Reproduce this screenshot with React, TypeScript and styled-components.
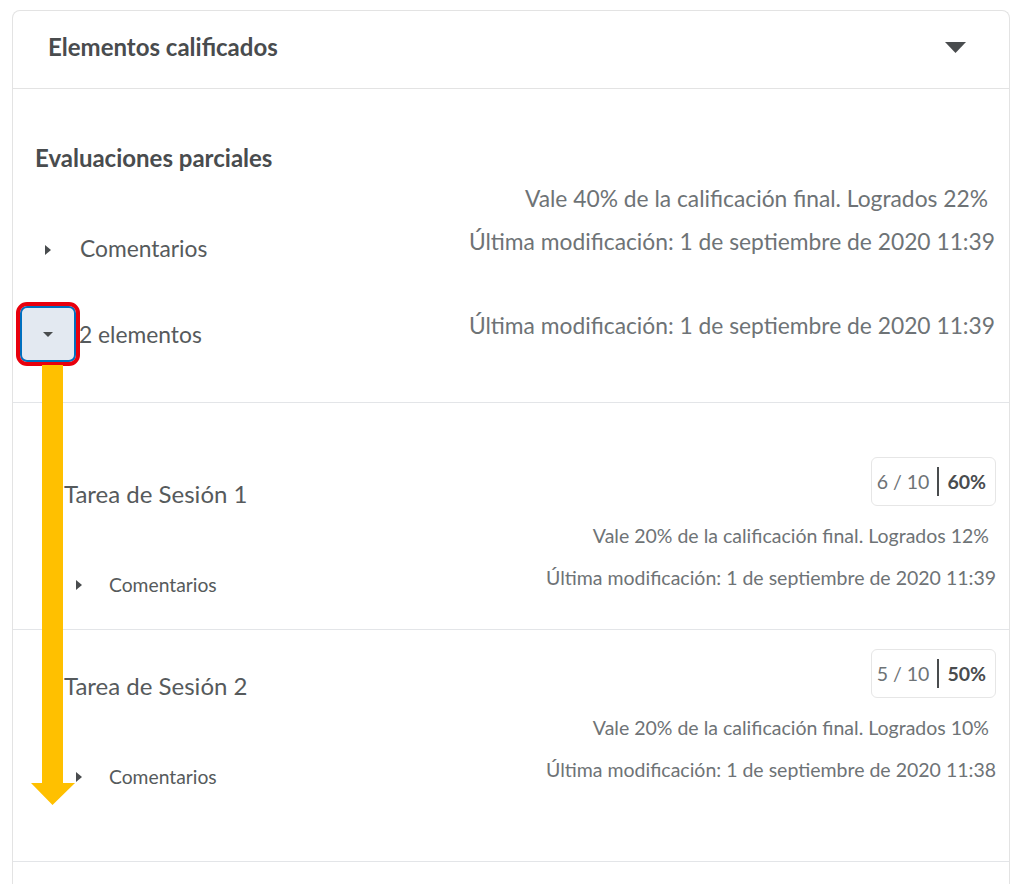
import React from "react";
import styled, { createGlobalStyle } from "styled-components";

const GlobalStyle = createGlobalStyle`
  body {
    margin: 0;
    background: #ffffff;
    font-family: Lato, "Noto Sans", sans-serif;
  }
`;

const items = [
  {
    title: "Tarea de Sesión 1",
    score: "6 / 10",
    percent: "60%",
    weight: "Vale 20% de la calificación final. Logrados 12%",
    modified: "Última modificación: 1 de septiembre de 2020 11:39",
    top: 54,
    bottom: 32,
  },
  {
    title: "Tarea de Sesión 2",
    score: "5 / 10",
    percent: "50%",
    weight: "Vale 20% de la calificación final. Logrados 10%",
    modified: "Última modificación: 1 de septiembre de 2020 11:38",
    top: 19,
    bottom: 72,
  },
];

const CaretDown = ({ w, h }: { w: number; h: number }) => (
  <svg width={w} height={h} viewBox={`0 0 ${w} ${h}`}>
    <polygon points={`0,0 ${w},0 ${w / 2},${h}`} fill="#494c4e" />
  </svg>
);

const CaretRight = () => (
  <svg width="6" height="10" viewBox="0 0 6 10">
    <polygon points="0,0 6,5 0,10" fill="#494c4e" />
  </svg>
);

const DownArrow = () => (
  <ArrowSvg width="44" height="440" viewBox="0 0 44 440">
    <polygon
      points="11,0 32,0 32,418 44,418 21.5,440 0,418 11,418"
      fill="#ffc000"
    />
  </ArrowSvg>
);

const App = () => {
  return (
    <>
      <GlobalStyle />
      <Card>
        <Header>
          <HeaderTitle>Elementos calificados</HeaderTitle>
          <HeaderCaret>
            <CaretDown w={21} h={11} />
          </HeaderCaret>
        </Header>

        <Category>
          <CategoryTitle>Evaluaciones parciales</CategoryTitle>
          <Meta inset={7} gap={12}>
            Vale 40% de la calificación final. Logrados 22%
          </Meta>
          <Row gap={15}>
            <Left>
              <Slot>
                <CaretRight />
              </Slot>
              <Label>Comentarios</Label>
            </Left>
            <Meta>Última modificación: 1 de septiembre de 2020 11:39</Meta>
          </Row>
          <Row gap={44}>
            <ToggleLeft>
              <ToggleWrap>
                <ToggleButton>
                  <CaretDown w={10} h={5} />
                </ToggleButton>
                <DownArrow />
              </ToggleWrap>
              <Label flush>2 elementos</Label>
            </ToggleLeft>
            <Meta gap={5}>
              Última modificación: 1 de septiembre de 2020 11:39
            </Meta>
          </Row>
        </Category>

        {items.map((item) => (
          <Item key={item.title} top={item.top} bottom={item.bottom}>
            <ItemHead>
              <ItemTitle>{item.title}</ItemTitle>
              <ScoreBox>
                <span>{item.score}</span>
                <ScoreDivider />
                <Percent>{item.percent}</Percent>
              </ScoreBox>
            </ItemHead>
            <Meta small inset={7} gap={18}>
              {item.weight}
            </Meta>
            <Row gap={18}>
              <ItemComments>
                <CaretRight />
                <Label small>Comentarios</Label>
              </ItemComments>
              <Meta small>{item.modified}</Meta>
            </Row>
          </Item>
        ))}
      </Card>
    </>
  );
};

const Card = styled.section`
  margin: 10px 14px 0 12px;
  min-height: 873px;
  background: #ffffff;
  border: 1px solid #e3e3e3;
  border-bottom: none;
  border-radius: 8px 8px 0 0;
`;

const Header = styled.div`
  display: flex;
  align-items: flex-start;
  justify-content: space-between;
  height: 78px;
  box-sizing: border-box;
  padding: 22px 43px 0 35px;
  border-bottom: 1px solid #e3e3e3;
`;

const HeaderTitle = styled.h2`
  margin: 0;
  font-size: 24px;
  line-height: 28px;
  font-weight: 700;
  color: #494c4e;
`;

const HeaderCaret = styled.span`
  display: flex;
  margin-top: 9px;
`;

const Category = styled.div`
  padding: 0 14px 40px 7px;
  border-bottom: 1px solid #e3e5e8;
`;

const CategoryTitle = styled.h3`
  margin: 55px 0 0 15px;
  font-size: 24px;
  line-height: 28px;
  font-weight: 700;
  color: #494c4e;
`;

const Meta = styled.div<{ small?: boolean; inset?: number; gap?: number }>`
  margin: ${({ gap }) => gap ?? 0}px ${({ inset }) => inset ?? 0}px 0 auto;
  text-align: right;
  font-size: ${({ small }) => (small ? 19.5 : 22.8)}px;
  line-height: ${({ small }) => (small ? 24 : 28)}px;
  color: #6e7376;
  white-space: nowrap;
`;

const Row = styled.div<{ gap: number }>`
  display: flex;
  align-items: flex-start;
  justify-content: space-between;
  margin-top: ${({ gap }) => gap}px;
`;

const Left = styled.div`
  display: flex;
  align-items: center;
  margin-top: 7px;
`;

const Slot = styled.span`
  display: flex;
  justify-content: center;
  width: 56px;
  margin-right: 4px;
  padding-top: 3px;
`;

const Label = styled.span<{ small?: boolean; flush?: boolean }>`
  font-size: ${({ small }) => (small ? 19.3 : 22.8)}px;
  line-height: ${({ small }) => (small ? 24 : 28)}px;
  color: #565a5c;
  margin-left: ${({ flush }) => (flush ? 3 : 0)}px;
`;

const ToggleLeft = styled.div`
  display: flex;
  align-items: center;
`;

const ToggleWrap = styled.div`
  position: relative;
  width: 56px;
  height: 56px;
`;

const ToggleButton = styled.button`
  display: flex;
  align-items: center;
  justify-content: center;
  width: 56px;
  height: 56px;
  padding: 0;
  box-sizing: border-box;
  background: #e3e9f1;
  border: 2px solid #006fbf;
  border-radius: 7px;
  outline: 4px solid #e8000d;
  outline-offset: 0;
`;

const ArrowSvg = styled.svg`
  position: absolute;
  left: 11px;
  top: 59px;
  z-index: 2;
`;

const Item = styled.div<{ top: number; bottom: number }>`
  padding: ${({ top }) => top}px 13px ${({ bottom }) => bottom}px 51px;
  border-bottom: 1px solid #e3e5e8;
`;

const ItemHead = styled.div`
  display: flex;
  align-items: flex-end;
  justify-content: space-between;
`;

const ItemTitle = styled.div`
  font-size: 24px;
  line-height: 24px;
  color: #565a5c;
`;

const ScoreBox = styled.div`
  display: flex;
  align-items: center;
  height: 49px;
  box-sizing: border-box;
  padding: 0 9px 0 5px;
  border: 1px solid #e6e6e6;
  border-radius: 6px;
  font-size: 19.5px;
  color: #6e7376;
`;

const ScoreDivider = styled.span`
  width: 2px;
  height: 29px;
  margin: 0 8px 0 8px;
  background: #494c4e;
`;

const Percent = styled.span`
  font-weight: 700;
  color: #494c4e;
`;

const ItemComments = styled.div`
  display: flex;
  align-items: center;
  gap: 27px;
  margin-top: 7px;
  padding-left: 12px;
`;

export default App;
